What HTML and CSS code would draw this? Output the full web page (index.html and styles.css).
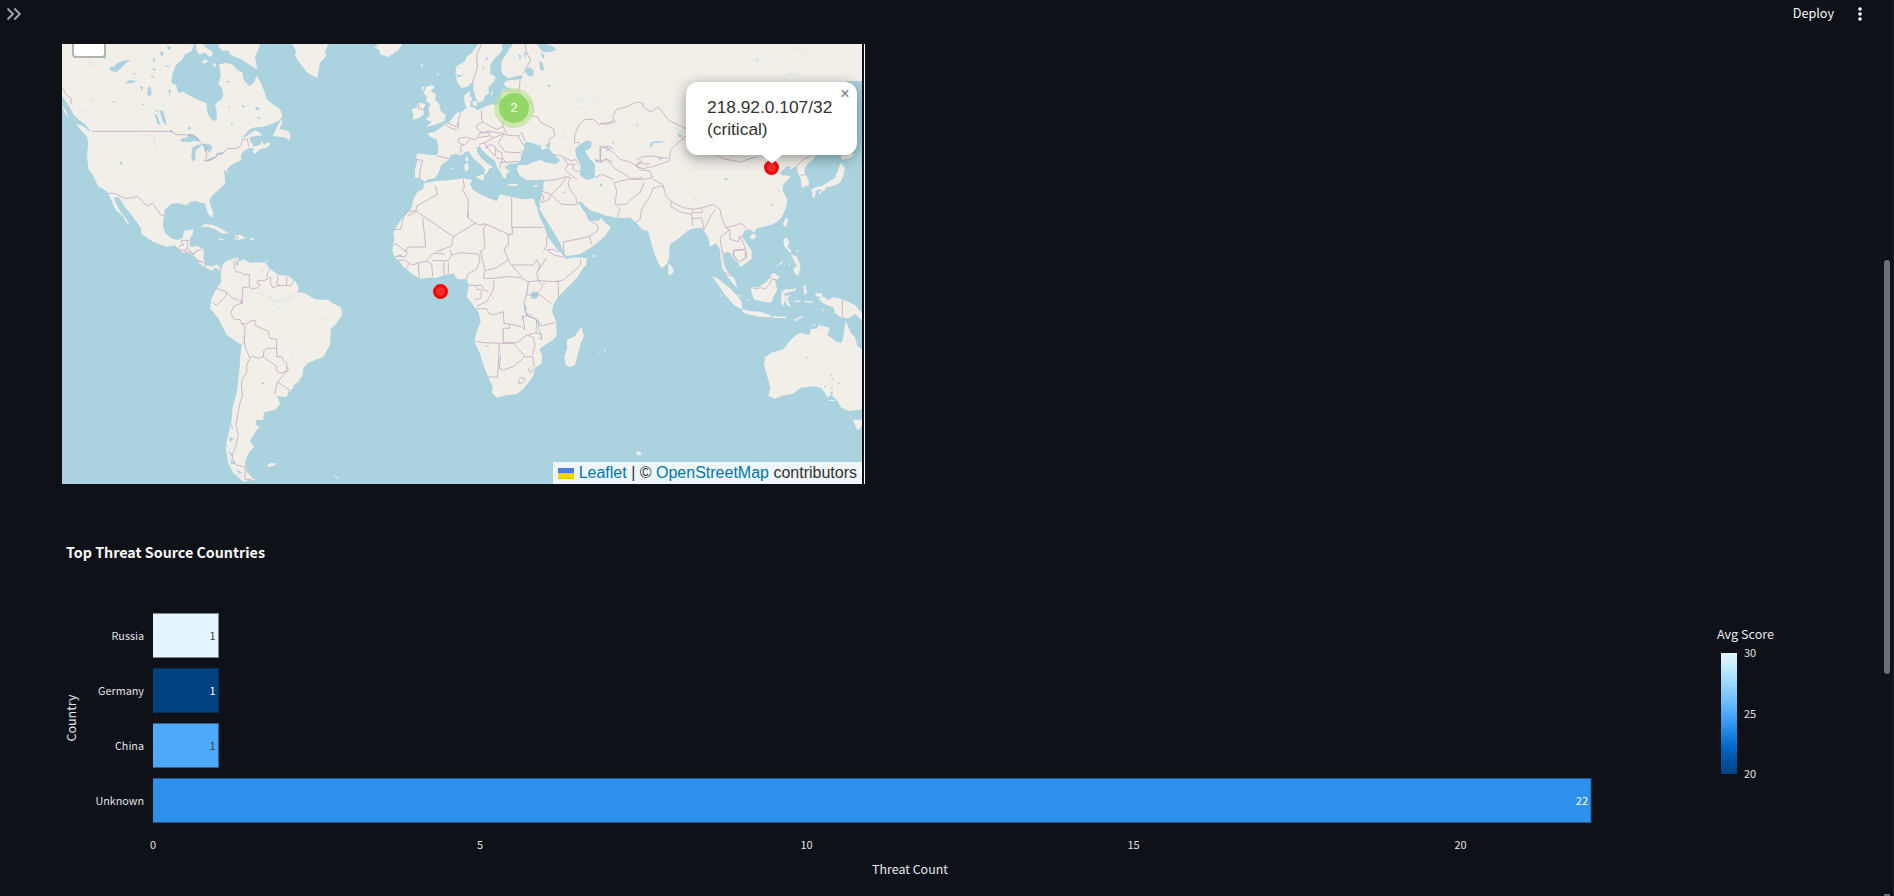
FILE: index.html
```html
<!DOCTYPE html>
<html lang="en">
<head>
<meta charset="utf-8">
<title>Threat Dashboard</title>
<link rel="stylesheet" href="styles.css">
</head>
<body>
<div class="app">
<header class="toolbar">
  <svg class="expand" viewBox="0 0 16 16"><path d="M1.500 2.500 7 8l-5.500 5.500M8.300 2.500 13.800 8l-5.500 5.500"/></svg>
  <div class="actions"><span class="deploy">Deploy</span>
  <svg class="kebab" viewBox="0 0 4 14"><circle cx="2" cy="2" r="1.800"/><circle cx="2" cy="7" r="1.800"/><circle cx="2" cy="12" r="1.800"/></svg></div>
</header>
<main class="content">
<section class="map-frame">
<div class="map">
<svg class="world" viewBox="62 44 800 440">
<!-- North America -->
<g transform="translate(50 36) scale(.33333)">
<g class="land">
<path d="M36 24H432L425 45 405 55 398 70 380 85 368 110 364 140 378 148 385 170 400 168 420 180 445 192 470 202 472 230 480 245 490 256 500 250 500 225 495 210 500 200 515 190 520 175 515 155 505 145 512 120 508 85 530 80 548 87 560 100 578 110 580 130 598 151 612 140 620 118 632 140 645 170 650 190 668 205 690 218 697 240 690 252 670 262 640 272 610 275 590 290 572 310 590 300 612 285 627 290 620 300 600 303 601 315 612 332 630 326 635 316 642 326 658 318 662 324 650 335 630 340 614 354 608 346 612 338 600 335 580 345 572 360 575 372 555 380 540 390 530 402 534 412 522 400 525 430 525 445 505 462 485 480 478 495 482 510 490 530 486 545 475 535 468 515 465 502 450 501 440 495 420 498 410 508 385 502 365 503 345 520 342 540 338 570 345 590 365 608 385 612 398 605 402 585 430 580 428 595 420 608 418 632 440 630 462 638 460 670 468 687 485 692 500 686 512 694 515 706 505 702 498 694 485 704 465 694 445 680 440 667 425 654 400 650 385 640 375 628 350 632 310 618 275 595 272 575 240 530 222 510 208 485 195 483 193 492 210 525 228 548 239 565 230 562 218 540 200 524 190 508 175 472 165 462 145 452 130 420 115 398 111 360 115 320 110 300 95 285 78 265 95 268 125 290 105 265 85 250 70 235 60 215 50 200 36 180Z"/>
<path d="M725 24H835L825 48 828 60 810 80 802 126 785 118 770 108 752 85 735 60 738 42ZM668 300 680 275 692 252 698 255 688 278 700 282 715 285 722 300 718 314 708 305 690 302ZM438 24 460 24 468 35 485 45 490 55 478 62 465 50 448 55 440 45ZM505 24 630 24 622 48 615 60 622 100 600 88 578 72 555 62 540 55 535 42 518 45 508 36ZM456 77 468 70 474 76 462 84ZM488 85l6-4 5 6-6 8ZM36 212l8 5 12 27-10-10ZM610 283l18 5 8 10-12 2ZM452 573 465 564 485 566 505 573 525 585 538 593 515 592 495 580 475 573ZM555 597 572 597 588 607 565 612 549 608 560 605ZM505 608l14 0 3 5-14-1ZM600 606h12v5h-11ZM502 545l4 10M510 532l12 6"/>
</g>
<g class="water">
<path d="M178 95 195 90 200 82 225 73 243 72 228 80 215 95 200 108 182 104ZM225 142 238 132 262 136 240 142ZM308 65l9 4-6 12ZM330 45l12 5-8 15ZM350 30l14 4-6 10ZM293 155l8-5 4 25-12 8ZM268 150l12 3-4 12ZM310 95l9 6-9 4ZM345 92l10-4 3 6ZM355 160l8 2-5 18ZM160 60l12 5-9 4ZM328 223 340 225 346 250 350 268 340 260ZM312 230 322 240 332 268 322 262ZM315 222l8 0 0 10ZM413 275l8-4 1 8-8 3ZM485 185l18-5-8 12ZM535 210l8 3-7 4ZM575 208l12 2-10 6ZM615 212l16 4-10 8ZM620 240l15 8-12 0ZM545 262l5 5-8 5ZM528 135h12l-6 6ZM207 377l8 0 3 10-7-3ZM248 110l12 2-8 4ZM303 120l12 1-10 6ZM275 204h9v3h-9ZM183 195h12v3h-12Z"/>
<path d="M388 316 400 305 410 306 416 293 428 295 445 305 450 318 435 314 418 318 402 317ZM426 335 440 327 457 325 450 333 437 345 436 370 428 377 424 362ZM452 325 475 323 488 332 482 345 478 352 472 340 466 352 460 330ZM466 375 480 366 500 360 490 370 473 377ZM495 357 505 350 522 349 518 355 500 358ZM360 282l7 0 2 6-7 2ZM590 285 605 277 635 280 605 283Z"/>
</g>
<g class="fine"><path d="M100 175l12 14 18 3M85 215l24 12M120 70v12l32 13M270 300l30-3 12 10 4 30M410 30l20-8M590 200l8 12M640 80l-6 20M508 545l30 12M525 560l30 20M632 612l15 10 4 30-2 30"/></g>
<g class="border">
<path d="M36 153 48 175 64 188 62 205M126 286H362L380 296 415 297 432 300 455 320 470 335 470 365 463 375 480 372 500 362 500 355 518 352 532 338 562 337 573 328 577 312 592 308 596 332M175 472H193L225 487 248 485 262 481 290 509 308 502 325 525 332 537 343 539M385 640 390 628 402 627 394 620 396 613H418M412 613 412 635 405 648M412 635 428 655 440 645 462 638M440 672 458 678M562 598V610"/>
</g></g>
<!-- South America -->
<g transform="translate(50 250) scale(.33333)">
<path class="land" d="M512 70 518 45 528 34 545 28 562 20 566 26 558 38 580 28 600 38 645 37 658 55 685 75 715 78 735 92 747 113 742 126 765 130 795 148 835 150 852 162 873 172 876 195 860 220 842 238 840 285 820 320 795 330 775 338 760 353 758 375 742 400 720 425 708 442 680 438 686 448 690 462 675 480 642 487 640 510 618 510 617 525 629 530 620 540 600 572 612 590 595 610 584 638 590 665 610 686 625 688 600 690 580 695 550 670 535 640 528 600 530 575 545 510 548 470 562 420 568 360 574 285 530 255 505 205 480 175 485 145 500 115 514 95ZM652 645l12-7 16 3-8 6-18 4ZM850 675l10 4 7 10ZM645 32h8v6ZM408 132h3v2h-3Z"/>
<g class="water"><path d="M557 35l8 2 1 8-8 3ZM634 60l5 2-4 5ZM575 258l8 5-3 4ZM632 400l10-4 0 8ZM660 137l6 2-3 4ZM747 158l5 4-2 4ZM727 410l12-12 5 0-10 14ZM545 518l5 20-7-2ZM532 600l15 12-2 8ZM540 630l18 8-14 6ZM555 655l22 14-10 2ZM538 560l14 6-12 10Z"/></g>
<g class="fine"><path d="M748 125 725 140 700 148 690 153 665 152 650 140 620 128M720 145l-18 20-28 22M810 210l15-4M720 322l8-6M532 590l10 10M537 620l12 8M543 650l8 6M555 672l20 8"/></g>
<g class="border"><path d="M562 22 552 34V52L558 65 575 68 580 73 598 74V108L605 118 620 114 632 104 622 100V92H640L655 86 650 75 660 58M662 80V100L668 113 682 108 705 106 722 108 732 90M682 78 684 90 679 100 690 107M710 79V106M598 112H578V125L576 145 578 160 570 155 562 147H550L530 127 500 115M530 127 528 138 500 165 487 160M574 148V160L552 168 542 190 555 210 570 208 575 221H590L600 214 615 210 615 226 655 244 660 265 680 268V300M575 221 585 230 583 275 587 295 600 325 608 318 625 325 640 320 642 300 655 295H680V320L695 320 700 332 710 340V352L716 358 700 375 682 397 674 432M583 275 574 285M640 320 655 332 680 348 678 362 690 370 708 365 712 350M682 395 718 420 716 432M600 325 590 345V368L577 385 574 410 578 435 570 460 564 490 558 525 565 555 556 595 548 610V625L557 645 585 650V688H605"/></g>
<path class="border" d="M388 0H400L408 0M405 6 425 8 430 12 445 0M442 32 466 40V52M510 52V64"/>
</g>
<!-- Europe, Near East, northern Africa -->
<g transform="translate(340 36) scale(.33333)">
<g class="land">
<path d="M415 24H485L487 42 478 55 465 65 452 85 450 112 468 124 462 135 445 155 447 172 435 180 430 195 415 200 407 185 400 160 400 135 385 150 365 157 352 140 346 110 350 90 375 75 380 62 398 48Z"/>
<path d="M520 24 510 36 505 45 485 75 483 98 488 115 505 127 530 120 548 118 545 130 505 133 490 142 500 155 512 155 510 163 488 160 483 175 483 195 478 207 455 205 428 215 412 223 400 214 390 213 392 198 397 185 388 180 392 165 380 172 372 180 374 200 380 215 365 228 350 230 335 250 325 262 315 264 300 277 285 287 262 292 270 302 290 310 295 335 292 357 270 357 232 352 228 362 232 375 225 400 225 425 240 426 255 438 264 430 285 427 298 405 303 388 328 370 332 358 348 354 365 358 375 348 388 346 395 362 412 378 425 388 435 400 433 418 442 410 448 397 460 395 440 380 425 368 412 350 410 335 420 330 428 344 448 362 465 375 472 395 480 405 490 425 500 428 497 415 510 408 495 395 505 385 530 382 543 372 542 360 550 345 565 320 590 325 600 340 610 345 625 334 615 330 632 315 630 330 625 340 640 355 660 372 650 384 620 380 600 372 580 378 560 387 535 388 530 400 540 420 560 432 590 433 612 430 610 455 603 485 598 505 603 510 598 518 620 555 645 595 662 625 672 655 680 660 720 655 760 630 795 600 812 572 795 560 784 545 775 555 745 553 738 535 728 520 718 505 714 498 725 498 735 510 755 525 780 532 800 540 860 545V24Z"/>
<path d="M100 33 115 30 108 24H187L175 42 145 63 120 55 118 42ZM258 153 275 148 285 153 272 165 288 175 285 190 298 205 302 225 318 238 312 255 290 265 258 273 275 258 258 250 270 235 265 218 272 205 258 195 262 180 250 175ZM232 203 242 200 256 205 250 218 252 235 238 245 218 252 220 235 215 220 230 215ZM245 152l8 0-6 15ZM240 85h8v10ZM290 112h6v10ZM376 366l8-5 1 15-7 0ZM373 385l12-3 0 18-10 8ZM408 421 433 415 430 434 412 426ZM503 444 535 445 528 450 508 449ZM580 450l16-5-8 9ZM398 196l14 0-2 15-10-2ZM455 165l4 3-8 17ZM310 402l8-2M327 398l10-3v6ZM470 408l5 5Z"/>
<path d="M252 442 290 435 330 432 372 427 396 432 390 445 400 463 430 480 470 496 480 475 515 483 550 490 580 487 590 512 598 540 612 570 622 600 640 625 660 652 678 670 700 664 740 667 738 690H195L178 672 160 656 157 640 163 610 160 590 165 578 185 548 215 515 220 490 232 468 250 458Z"/>
</g>
<g class="water"><path d="M558 98l12-4 12 12-5 16-14-3-6-12ZM597 75l10 4 6 25-12-2ZM590 24h30l20 8 8 10-15 5-20 2-8-5ZM602 48l14 12-8 8ZM622 145l12 4-9 5ZM552 48l8 4-6 18ZM535 55l10 4-5 14ZM705 340 720 325 740 313 756 318 752 335 735 345 750 370 765 385 764 425 740 432 720 418 722 385 710 365ZM778 445l8-2 1 7-6 2ZM668 470l8-4 2 6ZM765 368l12 5-2 8-8-4ZM555 318 578 320 590 335 600 325 605 342 625 335 645 360 658 375 640 382 615 378 595 366 572 376 550 378 545 368Z"/><path d="M670 365l7 5-4 6ZM440 62l5 4-10 15ZM428 90l5 3-3 12ZM350 115l20 5-18 4Z"/></g>
<g class="fine"><path d="M716 195l18-5M718 220l14-8M740 205l15-15 12-3 10-20M350 90l20 10M350 125l22-10M360 80l18 8M37 400h4M57 410h8M85 424h5M155 470h5M150 517l5-2M165 520l6-2M180 516l8-4M90 620l6 4M85 632l10-2M98 638l6 2M490 385l30 15M500 410l30 20M505 430l12 6M515 395l12 10M660 305l15-10M570 570l15-12M330 400l12 0M240 180l6 5"/></g>
<g class="border">
<path d="M425 24 410 55 412 95 398 138M555 24 560 50 572 72 550 112M540 133 538 165M488 165H535L555 195 575 200 582 225 572 240 592 242 600 258 640 278 644 298 625 315M485 195 510 188 535 170M480 206 498 208 500 230 488 268 500 292M425 222 425 250 430 260 470 280 490 272M362 228 355 255V280M325 262 350 272 355 258M315 265 330 275 350 282M430 258 410 268 408 275 428 292 445 285 470 290 493 292M356 308 378 303 408 312 420 290 448 290 448 300 415 305M356 308 355 320 372 328 390 310M370 325 362 330 363 352M290 360 328 368M228 370 248 373 242 395 238 428M448 298 460 305 490 295 508 298 535 300 545 320 555 330M460 305 435 320 418 325M490 298 475 320 495 348 540 350 548 345M535 300 545 290 555 315M435 320 445 340 465 360 468 335 455 325 435 335M465 340 485 350 488 370 478 398M468 365 490 370 500 380 535 375M478 380 500 378M237 203l-2 14 15 4"/>
<path d="M635 355 665 360 695 375 705 370 718 388M675 370 685 385 675 400 690 415 710 430M688 385 705 385 695 400M700 400 720 408M612 435 650 430 680 422 692 425 684 440 690 460 708 485 712 505M680 425 660 450 635 475 605 465M605 500 625 492 635 475M635 478 665 505 710 507M600 475 612 480 605 502M745 550 775 570 772 585 750 600 720 608 670 618 672 655M748 602 755 625M840 440 822 445 830 470 820 480 832 520 825 545M705 295 703 320 720 320M705 295 715 270 735 250 760 250 775 265 812 258 830 245 825 225 840 215M782 380V338L805 330 840 350M765 372 785 378 795 368 820 378 840 398M765 425 785 415 820 430 840 435"/>
<path d="M286 448 292 475 262 492 230 510 228 525H202L190 545 182 580H160M370 430 373 455 367 460 385 490 383 545 405 562 340 602M228 525 340 602M340 602 335 630 308 640 270 655 258 668 262 680M228 527 202 540M248 545 257 633H205L195 645 170 625 162 625M385 525V545M405 562 420 568 435 563 505 595 505 630 495 635 490 660 505 685M515 485V574H610M517 574V595H505M438 563 430 580 435 635 420 652 395 655 350 652 338 655 330 690M195 645 205 668 160 655M160 650H185M165 660H180M620 600 620 630 608 650 605 690M620 642 640 640 665 655M430 650 425 690M275 672 310 670 330 680 300 640"/>
</g>
</g>
<!-- Asia -->
<g transform="translate(600 36) scale(.33333)">
<g class="land">
<path d="M40 24H786V135L740 135 740 320 715 325 680 345 650 355 640 370 620 388 612 405 625 430 627 448 605 455 603 430 590 403 595 395 585 393 570 402 572 390 558 393 540 410 545 418 572 420 565 430 550 445 548 465 562 490 558 515 545 545 525 562 500 570 470 577 462 590 450 580 435 582 425 600 440 622 455 645 455 668 440 680 420 694 415 680 400 668 390 650 378 648 372 652 372 687 385 710 405 730 412 757 400 745 385 725 368 700 362 670 360 642 348 622 330 632 325 605 310 580 302 575 275 578 262 585 235 608 210 625 207 650 208 665 200 685 185 697 175 682 160 645 150 605 144 585 128 582 110 562 92 545 40 545Z"/>
<path d="M722 380 735 395 730 420 720 440 700 450 680 453 672 465 655 460 640 470 632 462 650 452 665 450 690 435 705 425 715 400ZM640 462l8 10-6 16-6-10ZM655 467l12-3-8 12ZM720 362 740 350 765 355 750 365 728 372ZM548 565 558 545 564 550 558 575ZM450 600 460 593 470 600 460 610 452 608ZM550 608 562 605 568 620 562 632 575 645 570 650 552 630ZM590 640l5 6-3 4ZM0 560 32 572 15 600 0 612ZM600 468l6-3-2 5Z"/>
</g>
<g class="water"><path d="M150 330 155 318 175 315 198 318 175 320 160 322 155 335ZM232 292l14 5-2 8-9-4ZM375 425l9 3-2 5-8-2ZM35 318l10 0-4 6ZM18 340l8-5 4 6-12 4ZM280 480l6 2-4 3ZM174 365l16 2-10 4ZM512 502l6 4-4 6ZM108 264l8 2-4 7ZM0 443l5 2-4 4ZM535 463h4v4h-4Z"/></g>
<g class="fine"><path d="M458 70l22 4-8-12 0 20M582 24l30 30 8 8M565 118l25-4M215 220l15-12M185 205l4 6M225 275l18 12M280 400l10-6M545 655l25 5M560 660l18 15M575 670l20 12M620 520l-8 20M675 455l12 6M755 640v4M318 655l-4 30M200 540l8-4"/></g>
<g class="border"><path d="M0 262 20 265 45 258 38 242 50 220 80 212 112 198 128 202 130 213 152 228 175 212 208 255 232 265 258 278M258 300 232 322 212 340 208 375 165 390 130 398M110 370 130 362 155 360 205 368M115 380 145 385 150 380M130 398 110 392 125 375 108 385 122 402 150 405 158 425 130 430M0 330 20 335 40 350 60 370 90 378 112 392M0 330V378L20 370 45 398 75 415 95 430 130 430M42 440 75 432 95 428 130 425M42 440 50 465 45 505 60 520 52 543M50 505 78 505 100 485 120 470 132 440M158 430 188 445 198 480 215 498 250 515 280 520 308 515 340 505 360 520M190 450 160 455 150 480 125 520 120 550 105 560M215 498 210 510 240 528 275 535 278 520M278 530H305L308 520M275 535 278 570M278 548 305 545 312 580 330 545 345 520M360 520 365 545 378 575 390 585M378 575 400 570 425 562 440 578M390 580 360 605 365 640 370 650M390 585 390 610 415 618 420 600 438 640M400 645 435 640 438 665 422 675M400 645 402 660 415 675M335 350 370 368 420 378 470 362M580 400 610 370 640 355M602 418 620 415"/></g>
</g>
<!-- Sub-Saharan Africa -->
<g transform="translate(370 250) scale(.33333)">
<path class="land" d="M68 5 75 25 85 30 100 50 125 70 150 87 175 83 200 83 225 75 250 70 262 88 290 88 297 105 290 140 305 160 325 185 332 215 320 245 313 275 330 310 340 345 355 380 368 410 366 430 382 443 410 435 440 433 462 415 490 378 495 353 515 342 516 315 508 298 520 288 552 268 560 255 558 215 546 185 550 165 565 140 590 115 620 85 645 45 651 24 620 30 590 34 572 5ZM634 230 642 258 632 280 615 345 600 352 588 345 583 320 592 295 590 270 615 258ZM586 0 592 18 632 4V0ZM668 16h8v4h-8ZM684 309h6v4ZM702 300h5v5ZM582 225h3v3ZM285 94h4v4ZM533 579h4v2ZM655 573h5v2Z"/>
<g class="water"><path d="M484 125H504V140L495 148 483 143ZM462 165l6 0 2 20 8 15-8-2ZM502 205l6 10 0 25 8 15-8-4-4-25ZM455 198h6v8h-6ZM480 190l10 3 0 4ZM520 92l5 12-4 0ZM347 287h10v4h-10ZM468 125l5-3-3 10ZM368 140l4 4-4 4Z"/></g>
<g class="fine"><path d="M205 55l12-8 0 20M270 120h4M360 130l10 12M480 95l-8 25M500 60l30-40"/></g>
<g class="border"><path d="M72 22 95 15M80 18 105 20 112 12 108 0M85 30H105L118 40 105 60M118 40 130 45 145 38 148 85M145 38 170 35 185 42 188 80M165 35 190 10 225 12M188 32H235L245 15 240 0M222 35V75M235 70V38M245 15 270 8 325 12 330 30 320 58 295 70 288 88M330 0 345 60 340 85 372 85 410 80 450 82 475 95 510 92 555 95 580 90 615 60 632 45V28M345 62 375 55 415 30 420 40 455 80M403 0 415 30M425 45 490 45 500 30 510 50 500 70 505 90M297 106H335L340 118 355 125M318 107 320 118 335 120 332 145 312 150M372 90 370 120 350 155 320 168M320 176H350L358 193 380 192 400 185 402 220 418 222V235H400V278L440 278M315 273 340 278 400 280 430 280M388 282 385 345 382 382 355 380M392 315 388 355 400 360 430 350 465 320M430 280 465 320 488 320 492 350M440 278 470 255 490 262 495 285 488 315M420 222 455 230 465 240 458 200 475 195 500 210 498 248 475 255M475 95 470 130 462 160 465 185 475 200M468 135H510L545 162M505 90 518 110 500 135M555 95H565V145M475 200 495 205 515 228 555 218M498 248 515 255V270L505 262M530 0 552 15 580 22M505 60 530 25M480 352 475 362 485 368 490 355M445 390l10-8 10 5-8 12-10 2Z"/></g>
</g>
<!-- Indonesia and Australia -->
<g transform="translate(600 250) scale(.33333)">
<path class="land" d="M786 298V478L770 480 748 484 722 472 712 452 695 435 682 442 665 415 640 408 600 415 578 432 545 437 525 446 505 438 511 412 498 365 492 345 495 322 515 308 550 298 570 272 585 257 600 248 612 252 628 255 632 238 652 235 655 225 690 233 682 255 710 275 725 278 732 250 735 220 740 218 752 248 765 262 772 288ZM758 508 770 510 786 508V525L778 539 770 536ZM655 145 672 140 686 150 700 141 727 148 765 165 775 178 786 188V212L765 192 745 205 722 202 705 188 700 172 680 165 668 158ZM453 112 475 112 500 95 515 72 522 68 540 82 525 92 532 120 520 140 515 158 490 155 462 148 455 130ZM335 78 352 85 390 115 410 135 425 155 426 178 405 168 375 135 355 105ZM425 177 450 183 480 185 512 196 512 202 480 200 440 192 428 186ZM545 125 555 118 580 118 590 112 585 122 560 128 550 134 560 138 572 135 562 145 570 165 573 172 560 165 555 150 548 172 543 150ZM572 12 590 18 602 48 595 78 582 68 580 55 590 50ZM204 45 210 42 222 62 216 73 206 75ZM610 105l6 0 5 22-8 8ZM645 130l20 0 3 12-20-3ZM518 198l40 2 0 5-40-2ZM540 208l15 3M580 210l25-12 5 3-24 12ZM582 152h20v4h-20ZM612 153l26 0 0 5-25-1ZM522 55 550 30 548 38ZM108 605l12 0 6 8-14 3ZM12 299l6 2-4 3ZM634 224l10-2 3 5ZM413 130l10 8-6 4ZM440 148h6v4h-6ZM358 124l10 15-4 0ZM565 35l6 10-4 2ZM620 182h5M665 178l6 0 0 6Z"/>
<path class="water" d="M617 321h9v3h-9ZM678 288l5 2-4 2ZM692 373h6v4h-6ZM694 385h5v5h-5ZM714 398h5v4h-5ZM694 410h4v6h-4ZM541 384l4 2-4 3ZM672 408h5v4h-5ZM690 430l8-8-1 15Z"/>
<path class="land" d="M687 450h17v3h-17ZM750 495h3v5h-3Z"/>
<path class="fine" d="M315 15v15l3 20M570 10l20 10M562 18l30 30M568 30l25 15M360 122l12 16M375 148l12 14M550 125l10 30M608 115l12 2M440 95h10M650 195l12-8"/>
<path class="border" d="M365 0 370 20 368 35M375 65 385 75 393 78M458 112 462 117 485 113 495 118 510 100 515 88H528M500 88 515 80M727 148V203M402 2 398 15 412 32 422 38M440 5 438 22 422 34M402 0 435-2"/>
</g>
</svg>
<div class="zoom-control"></div>
<div class="cluster"><div class="cluster-core">2</div></div>
<div class="marker marker-gulf"></div>
<div class="marker marker-china"></div>
<div class="popup"><span class="close">×</span>218.92.0.107/32<br>(critical)<svg class="tip" viewBox="0 0 24 12"><path d="M1 0H23L13.500 8.500Q12 10 10.500 8.500Z"/></svg></div>
<div class="attribution"><svg class="flag" viewBox="0 0 12 8" preserveAspectRatio="none"><path fill="#4C7BE1" d="M0 0h12v4H0z"/><path fill="#FFD500" d="M0 4h12v3H0z"/><path fill="#E0BC00" d="M0 7h12v1H0z"/></svg><span><a>Leaflet</a> | © <a>OpenStreetMap</a> contributors</span></div>
</div>
<div class="frame-edge"></div>
</section>
<svg class="chart" viewBox="0 530 1880 366">
<defs><linearGradient id="blues" x1="0" y1="0" x2="0" y2="1"><stop offset="0" stop-color="#e4f5ff"/><stop offset=".111" stop-color="#c7ebff"/><stop offset=".222" stop-color="#a6dcff"/><stop offset=".333" stop-color="#83c9ff"/><stop offset=".444" stop-color="#60b4ff"/><stop offset=".555" stop-color="#3d9df3"/><stop offset=".666" stop-color="#1c83e1"/><stop offset=".777" stop-color="#0068c9"/><stop offset=".888" stop-color="#0054a3"/><stop offset="1" stop-color="#004280"/></linearGradient></defs>
<text class="title" x="66" y="558" textLength="199" lengthAdjust="spacingAndGlyphs">Top Threat Source Countries</text>
<g class="bars"><rect x="152.500" y="613.500" width="66" height="44" fill="#e4f5ff" stroke="#7b858c"/><rect x="152.500" y="668.500" width="66" height="44" fill="#004280" stroke="#073058"/><rect x="152.500" y="723.500" width="66" height="44" fill="#4fa9fb" stroke="#315f8b"/><rect x="152.500" y="778.500" width="1438.500" height="44" fill="#2d90ec" stroke="#22578b"/></g>
<path class="axis-cover" d="M152.500 600V830"/>
<g class="ticks end"><text x="144" y="640" textLength="32.500" lengthAdjust="spacingAndGlyphs">Russia</text><text x="144" y="695" textLength="46" lengthAdjust="spacingAndGlyphs">Germany</text><text x="144" y="750" textLength="29" lengthAdjust="spacingAndGlyphs">China</text><text x="144" y="805" textLength="48.500" lengthAdjust="spacingAndGlyphs">Unknown</text></g>
<g class="ticks end"><text class="dark" x="215.500" y="640">1</text><text class="light" x="215.500" y="695">1</text><text class="dark" x="215.500" y="750">1</text><text class="light" x="1588" y="805">22</text></g>
<g class="ticks mid"><text x="153" y="849">0</text><text x="480" y="849">5</text><text x="806.500" y="849">10</text><text x="1133.500" y="849">15</text><text x="1460.500" y="849">20</text></g>
<text class="label mid" x="910" y="874" textLength="76" lengthAdjust="spacingAndGlyphs">Threat Count</text>
<text class="label mid" transform="translate(75.500 718) rotate(-90)" textLength="47" lengthAdjust="spacingAndGlyphs">Country</text>
<text class="label" x="1717" y="639" textLength="57" lengthAdjust="spacingAndGlyphs">Avg Score</text>
<rect x="1721" y="653" width="16" height="121" fill="url(#blues)"/>
<g class="ticks"><text x="1744" y="657">30</text><text x="1744" y="718">25</text><text x="1744" y="778">20</text></g>
</svg>
</main>
<div class="scroll"><i class="thumb"></i><i class="thumb-end"></i></div>
</div>
</body>
</html>
```
FILE: styles.css
```css
* { box-sizing: border-box; }
body { margin: 0; background: #0e1117; color: #fafafa; font-family: "Noto Sans CJK SC", "Noto Sans", sans-serif; overflow: hidden; }
.app { position: relative; height: 896px; width: 1894px; display: flex; flex-direction: column; overflow: hidden; }
.toolbar { height: 28px; flex: none; display: flex; justify-content: space-between; align-items: center; padding: 0 32px 0 6px; }
.expand { width: 16px; height: 16px; fill: none; stroke: #a3a5a8; stroke-width: 1.9; }
.actions { display: flex; align-items: center; gap: 24px; }
.deploy { font-size: 12.6px; line-height: 26px; padding-bottom: 2px; }
.kebab { width: 4px; height: 14px; fill: #fafafa; }
.content { flex: 1; display: flex; flex-direction: column; justify-content: space-between; padding-top: 16px; }
.map-frame { height: 440px; padding-left: 62px; display: flex; gap: 2px; }
.map { position: relative; width: 800px; height: 440px; overflow: hidden; background: #aad3df; font-family: "Liberation Sans", Arial, sans-serif; color: #333; }
.frame-edge { width: 1px; background: #fff; }
.world { display: block; width: 800px; height: 440px; }
.land { fill: #f2efe9; }
.water { fill: #aad3df; }
.border { fill: none; stroke: #bfa3bd; stroke-width: 2.8; opacity: .8; stroke-linejoin: round; }
.fine { fill: none; stroke: #b9d8df; stroke-width: 2; opacity: .7; }
.zoom-control { position: absolute; left: 10px; top: -22px; width: 34px; height: 36px; background: #fff; background-clip: padding-box; border: 2px solid rgba(0,0,0,.25); border-radius: 4px; }
.cluster { position: absolute; left: 432px; top: 44px; width: 40px; height: 40px; border-radius: 50%; background: rgba(181,226,140,.6); display: grid; place-items: center; }
.cluster-core { width: 30px; height: 30px; border-radius: 50%; background: rgba(110,204,57,.6); display: grid; place-items: center; color: #fff; font-size: 12px; }
.marker { position: absolute; width: 15px; height: 15px; border-radius: 50%; background: #f22b2b; border: 3px solid #f00; }
.marker-gulf { left: 371px; top: 240px; }
.marker-china { left: 702px; top: 116px; }
.popup { position: absolute; left: 624px; top: 38px; width: 171px; height: 73px; padding: 14px 20px 14px 21px; border-radius: 12px; background: #fff; box-shadow: 0 3px 14px rgba(0,0,0,.4); font-size: 17.333px; line-height: 22px; white-space: nowrap; }
.close { position: absolute; top: 0; right: 0; width: 24px; height: 24px; font: 16px/24px "Liberation Sans", sans-serif; color: #757575; text-align: center; }
.tip { position: absolute; left: 73.5px; top: 72px; width: 24px; height: 12px; fill: #fff; }
.attribution { position: absolute; right: 0; bottom: 0; height: 22px; padding: 0 5px; background: rgba(255,255,255,.8); display: flex; align-items: center; gap: 5px; font-size: 16px; line-height: 22px; white-space: nowrap; }
.attribution a { color: #0078a8; }
.flag { width: 16px; height: 11px; }
.chart { display: block; width: 1880px; height: 366px; flex: none; }
.chart text { fill: #fafafa; }
.chart .title { font-size: 14.2px; font-weight: 700; }
.chart .ticks text { font-size: 11px; fill: #e0e1e3; }
.chart .label { font-size: 12.4px; fill: #e6eaf1; }
.chart .end { text-anchor: end; }
.chart .mid { text-anchor: middle; }
.chart .ticks .dark { fill: #444; }
.chart .ticks .light { fill: #fff; }
.axis-cover { stroke: #0e1117; stroke-width: 1; }
.scroll { position: absolute; right: 0; top: 0; width: 10px; height: 896px; border-right: 1px solid #1b1e24; display: flex; flex-direction: column; justify-content: space-between; padding-top: 260px; }
.thumb { width: 6px; height: 414px; border-radius: 3px; background: #6e6f73; }
.thumb-end { width: 6px; height: 2px; background: #6e6f73; }
```
